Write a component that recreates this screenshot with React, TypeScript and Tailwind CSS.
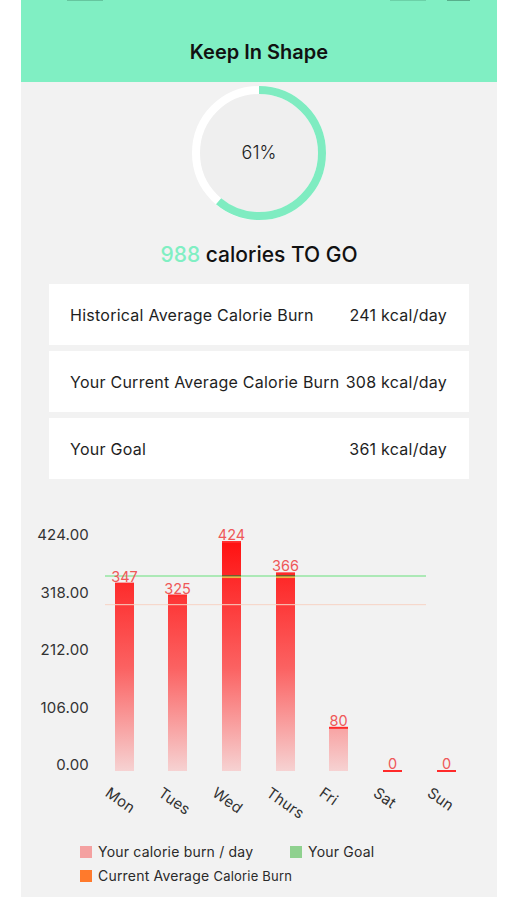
import React from 'react';

const FONT = { fontFamily: 'Inter, "Noto Sans", sans-serif' };

const STATS = [
  { label: 'Historical Average Calorie Burn', value: '241 kcal/day' },
  { label: 'Your Current Average Calorie Burn', value: '308 kcal/day' },
  { label: 'Your Goal', value: '361 kcal/day' },
];

const DAYS = [
  { day: 'Mon', value: 347 },
  { day: 'Tues', value: 325 },
  { day: 'Wed', value: 424 },
  { day: 'Thurs', value: 366 },
  { day: 'Fri', value: 80 },
  { day: 'Sat', value: 0 },
  { day: 'Sun', value: 0 },
];

const Y_TICKS = [
  { label: '424.00', y: 16 },
  { label: '318.00', y: 74 },
  { label: '212.00', y: 131 },
  { label: '106.00', y: 189 },
  { label: '0.00', y: 246 },
];

// chart geometry (svg coords)
const ZERO_Y = 251;
const SCALE = 0.54;
const BAR_W = 19;
const BAR_X = [94, 147, 201, 255, 308, 362, 416];
const GOAL_Y = ZERO_Y - 361 * SCALE;
const AVG_Y = ZERO_Y - 308 * SCALE;

function ProgressRing({ percent }: { percent: number }) {
  const r = 63;
  const c = 2 * Math.PI * r;
  return (
    <div className="relative w-[136px] h-[136px]">
      <svg width="136" height="136" viewBox="0 0 136 136">
        <circle cx="68" cy="68" r={r} fill="#efefef" stroke="#ffffff" strokeWidth="8" />
        <circle
          cx="68"
          cy="68"
          r={r}
          fill="none"
          stroke="#7fecc1"
          strokeWidth="8"
          strokeDasharray={`${(c * percent) / 100} ${c}`}
          transform="rotate(-90 68 68)"
        />
      </svg>
      <div className="absolute inset-0 flex items-center justify-center pb-[2px] text-[18px] font-light text-[#1c1c1c]">
        {percent}%
      </div>
    </div>
  );
}

function CalorieChart() {
  return (
    <svg width="476" height="312" viewBox="0 0 476 312" style={FONT}>
      <defs>
        <linearGradient id="barGrad" gradientUnits="userSpaceOnUse" x1="0" y1="22" x2="0" y2={ZERO_Y}>
          <stop offset="0" stopColor="#ff1212" />
          <stop offset="0.55" stopColor="#fb6262" />
          <stop offset="1" stopColor="#f6d2d2" />
        </linearGradient>
      </defs>

      {Y_TICKS.map((t) => (
        <text key={t.label} x="68" y={t.y} textAnchor="end" dominantBaseline="middle" fontSize="15" fill="#333" letterSpacing="0.2">
          {t.label}
        </text>
      ))}

      {/* bars */}
      {DAYS.map((d, i) => {
        const h = d.value * SCALE;
        const top = ZERO_Y - h;
        const x = BAR_X[i];
        return (
          <g key={d.day}>
            {h > 0 && <rect x={x} y={top} width={BAR_W} height={h} fill="url(#barGrad)" />}
            <rect x={x} y={top - 1} width={BAR_W} height="2" fill="#ff2a2a" />
          </g>
        );
      })}

      {/* goal + average lines */}
      <line x1="84" x2="405" y1={AVG_Y} y2={AVG_Y} stroke="#f7d3c4" strokeWidth="1" />
      <line x1="84" x2="405" y1={GOAL_Y} y2={GOAL_Y} stroke="#95e6a2" strokeWidth="1.5" />
      {DAYS.map((d, i) =>
        d.value * SCALE > ZERO_Y - GOAL_Y ? (
          <g key={d.day + '-mark'}>
            <rect x={BAR_X[i]} y={GOAL_Y - 1} width={BAR_W} height="1.5" fill="#6e5a28" />
            <rect x={BAR_X[i]} y={GOAL_Y + 0.5} width={BAR_W} height="1.5" fill="#f3b43e" />
          </g>
        ) : null
      )}

      {/* value labels */}
      {DAYS.map((d, i) => (
        <text
          key={d.day + '-v'}
          x={BAR_X[i] + BAR_W / 2}
          y={ZERO_Y - d.value * SCALE - 2}
          textAnchor="middle"
          fontSize="14.5"
          fill="#ef5858"
        >
          {d.value}
        </text>
      ))}

      {/* x labels */}
      {DAYS.map((d, i) => (
        <text
          key={d.day + '-x'}
          transform={`translate(${BAR_X[i] + BAR_W / 2 - 18} 272) rotate(35)`}
          dominantBaseline="middle"
          fontSize="15"
          fill="#333"
          letterSpacing="0.2"
        >
          {d.day}
        </text>
      ))}
    </svg>
  );
}

function LegendItem({ color, children }: { color: string; children: React.ReactNode }) {
  return (
    <div className="flex items-center gap-[6px]">
      <span className="w-[12px] h-[12px] shrink-0" style={{ backgroundColor: color }} />
      <span className="text-[14px] text-[#2a2a2a] leading-[24px] tracking-[0.2px]">{children}</span>
    </div>
  );
}

export default function App() {
  return (
    <div className="w-[506px] h-[900px] bg-white pl-[21px] pr-[9px]" style={FONT}>
      <div className="h-[897px] bg-[#f2f2f2] flex flex-col">
        {/* Header */}
        <header className="relative h-[82px] bg-[#80efc3] flex justify-center pt-[40px] shrink-0">
          <span className="absolute top-0 left-[46px] w-[36px] h-px bg-[#3e8a6a]/40" />
          <span className="absolute top-0 left-[369px] w-[36px] h-px bg-[#3e8a6a]/30" />
          <span className="absolute top-0 left-[426px] w-[23px] h-px bg-[#2f6f55]/50" />
          <h1 className="text-[20px] font-semibold leading-[24px] text-[#111]">Keep In Shape</h1>
        </header>

        {/* Progress */}
        <div className="flex justify-center mt-[3px]">
          <ProgressRing percent={61} />
        </div>
        <p className="mt-[20px] text-center text-[21px] font-medium leading-[28px] text-[#111]">
          <span className="text-[#80efc3]">988</span> calories TO GO
        </p>

        {/* Stats cards */}
        <div className="mt-[15px] px-[28px] flex flex-col gap-[6px]">
          {STATS.map((s) => (
            <div
              key={s.label}
              className="h-[61px] bg-white flex items-center justify-between pl-[21px] pr-[22px] text-[16px] tracking-[0.25px] text-[#1e1e1e]"
            >
              <span>{s.label}</span>
              <span>{s.value}</span>
            </div>
          ))}
        </div>

        {/* Chart */}
        <div className="mt-[41px]">
          <CalorieChart />
        </div>

        {/* Legend */}
        <div className="mt-[8px] pl-[59px] flex flex-col">
          <div className="flex">
            <div className="w-[210px]">
              <LegendItem color="#f4a1a1">Your calorie burn / day</LegendItem>
            </div>
            <LegendItem color="#8fd18f">Your Goal</LegendItem>
          </div>
          <LegendItem color="#ff7a2c">
            Current Average <span className="text-[13px]">Calorie Burn</span>
          </LegendItem>
        </div>
      </div>
    </div>
  );
}
